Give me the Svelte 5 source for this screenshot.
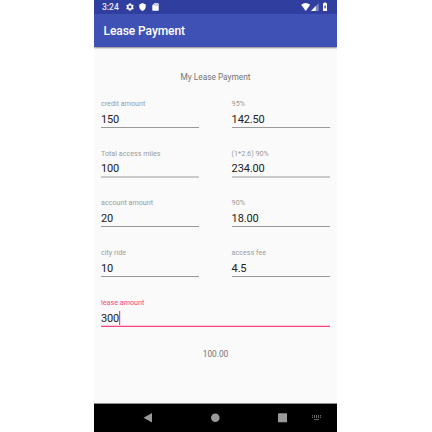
<script>
  const rows = [
    [{ label: 'credit amount', value: '150' }, { label: '95%', value: '142.50' }],
    [{ label: 'Total access miles', value: '100' }, { label: '(1*2.6) 90%', value: '234.00' }],
    [{ label: 'account amount', value: '20' }, { label: '90%', value: '18.00' }],
    [{ label: 'city ride', value: '10' }, { label: 'access fee', value: '4.5' }],
    [{ label: 'lease amount', value: '300', active: true }]
  ];
</script>

<div class="stage">
  <div class="phone">
    <header class="status">
      <span class="clock">3:24</span>
      <svg class="gear" width="8" height="8" viewBox="2 2 20 20" aria-hidden="true">
        <path fill="#fff" fill-rule="evenodd" d="M19.4 13c.1-.7.1-1.300 0-2l2.100-1.600-2-3.500-2.500 1a7 7 0 0 0-1.700-1L15 3H9l-.4 2.900a7 7 0 0 0-1.700 1l-2.500-1-2 3.500L4.600 11c-.1.700-.1 1.300 0 2l-2.200 1.600 2 3.500 2.500-1c.5.400 1.100.7 1.700 1L9 21h6l.4-2.900c.6-.3 1.200-.6 1.700-1l2.500 1 2-3.500zM12 15.700a3.700 3.700 0 1 1 0-7.400 3.700 3.700 0 0 1 0 7.400z" />
      </svg>
      <svg class="shield" width="7" height="8" viewBox="0 0 7 8" aria-hidden="true">
        <path fill="#fff" d="M3.500.1 6.700 1.400V3.700C6.700 5.600 5.400 7.300 3.500 7.900 1.600 7.300.3 5.600.3 3.700V1.400z" />
      </svg>
      <svg class="card" width="7" height="8" viewBox="0 0 7 8" aria-hidden="true">
        <path fill="#fff" d="M2.400.3H6q.7 0 .7.700V7q0 .7-.7.700H1q-.7 0-.7-.7V2.400z" />
        <path stroke="#303f9f" stroke-width=".5" d="M2.700 1.200v1.500M4 1.200v1.500M5.300 1.200v1.500" />
      </svg>
      <span class="grow"></span>
      <svg width="31" height="10" viewBox="0 0 31 10" aria-hidden="true">
        <path fill="#fff" d="M.2 2.700Q4.700-.8 9.200 2.700L4.700 8.900z" />
        <path fill="#7f89c6" d="M17.700 1.200V8.900H10z" />
        <path fill="#fff" d="M14.800 4.100V8.900H10z" />
        <path fill="#fff" d="M22 1.300h1.100V.6h1.800v.7H26v7.600h-4z" />
        <path fill="#303f9f" d="M24.300 2.600 22.900 5.500h1v2l1.300-2.900h-.9z" />
      </svg>
    </header>
    <div class="appbar">Lease Payment</div>
    <main>
      <div class="heading">My Lease Payment</div>
      <div class="form">
        {#each rows as row, i}
          <div class="row">
            {#each row as field}
              <div class="field" class:active={field.active} class:soft={i === 1}>
                <div class="label">{field.label}</div>
                <div class="value">{field.value}{#if field.active}<i class="caret"></i>{/if}</div>
                <div class="line"></div>
              </div>
            {/each}
          </div>
        {/each}
      </div>
      <div class="total">100.00</div>
    </main>
    <nav>
      <svg width="243" height="28" viewBox="0 0 243 28" aria-hidden="true">
        <g fill="#999">
          <path d="M49.500 13.800 58 9v9.600z" />
          <circle cx="121.300" cy="13.800" r="4.300" />
          <rect x="184" y="9.300" width="9" height="9" rx=".4" />
        </g>
        <path fill="#666" d="M218 11h1v1h-1zM220 11h1v3h-1zM222 11h1v3h-1zM224 11h1v3h-1zM226 11h1v1h-1zM218 12.500h1v1.500h-1zM226 12.500h1v1.500h-1zM220 15h5v1h-5z" />
      </svg>
    </nav>
  </div>
</div>

<style>
  .stage {
    width: 432px;
    height: 432px;
    background: #fff;
    display: flex;
    overflow: hidden;
    font-family: Roboto, "Liberation Sans", sans-serif;
  }
  .phone {
    width: 243px;
    height: 432px;
    margin-left: 94px;
    background: #fafafa;
    display: flex;
    flex-direction: column;
  }
  svg { display: block; flex: none; }
  .status {
    height: 14px;
    flex: none;
    box-sizing: border-box;
    background: #303f9f;
    display: flex;
    align-items: center;
    padding: 0 5px 0 8px;
  }
  .clock {
    width: 23.500px;
    color: #e8eaf5;
    font-size: 8.500px;
    font-weight: 500;
    line-height: 14px;
  }
  .shield { margin-left: 5.500px; }
  .card { margin-left: 6px; }
  .grow { flex: 1; }
  .appbar {
    height: 33px;
    flex: none;
    background: #3f51b5;
    color: #fff;
    font-size: 12px;
    letter-spacing: -.07px;
    font-weight: 500;
    line-height: 34px;
    padding-left: 9.500px;
    box-shadow: 0 1px 1.500px rgba(0, 0, 0, .45);
    clip-path: inset(0 0 -4px 0);
  }
  main { flex: 1; }
  .heading, .total {
    color: #737373;
    font-size: 8.300px;
    line-height: 10px;
    text-align: center;
  }
  .heading { padding-top: 25px; }
  .form { padding: 18px 7px 0; }
  .row {
    height: 49.700px;
    display: flex;
    justify-content: space-between;
  }
  .field { width: 98.400px; }
  .label {
    height: 8px;
    color: #9b9b9b;
    font-size: 7.180px;
    line-height: 8px;
    white-space: nowrap;
  }
  .value {
    height: 12px;
    margin-top: 6px;
    color: #212121;
    font-size: 11px;
    letter-spacing: -.16px;
    line-height: 12px;
    display: flex;
  }
  .line {
    height: 1px;
    margin-top: 1px;
    background: #999;
  }
  .soft .value { margin-top: 5.500px; }
  .soft .line { height: 2px; margin-top: .8px; background: #cacaca; }
  .active { width: 229px; }
  .active .label { color: #ff4081; }
  .active .line {
    background: #ff4081;
    box-shadow: 0 -1px 0 rgba(255, 64, 129, .25);
  }
  .caret {
    flex: none;
    width: 1px;
    height: 14px;
    margin: -2px 0 0 -.4px;
    background: #ff4081;
    box-shadow: 1px 0 0 rgba(255, 64, 129, .2);
  }
  .total { margin-top: 1px; }
  nav {
    height: 28px;
    flex: none;
    background: #000;
    border-top: 1px solid #8d8d8d;
  }
</style>
